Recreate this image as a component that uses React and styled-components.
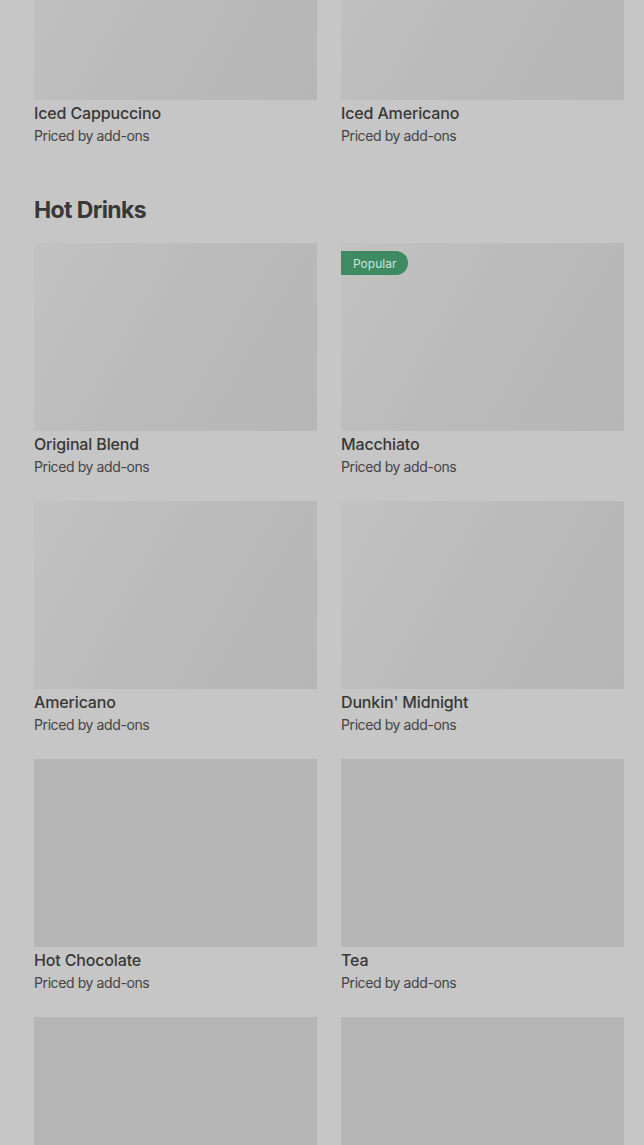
import React from "react";
import styled, { createGlobalStyle } from "styled-components";

const GlobalStyle = createGlobalStyle`
  html, body {
    margin: 0;
    padding: 0;
    background: #c6c6c6;
    overflow: hidden;
  }
  body {
    font-family: Inter, "Liberation Sans", sans-serif;
    color: #383838;
  }
`;

const iced = [
  { name: "Iced Cappuccino" },
  { name: "Iced Americano" },
];

const hot = [
  { name: "Original Blend", shimmer: true },
  { name: "Macchiato", shimmer: true, popular: true },
  { name: "Americano", shimmer: true },
  { name: "Dunkin' Midnight", shimmer: true },
  { name: "Hot Chocolate" },
  { name: "Tea" },
  { name: "" },
  { name: "" },
];

function Item({ name, shimmer, popular }) {
  return (
    <Card>
      <Thumb $shimmer={shimmer}>
        {popular && <Badge>Popular</Badge>}
      </Thumb>
      {name && (
        <>
          <Name>{name}</Name>
          <Price>Priced by add-ons</Price>
        </>
      )}
    </Card>
  );
}

export default function App() {
  return (
    <>
      <GlobalStyle />
      <Page>
        <Section>
          <Grid>
            {iced.map((i) => (
              <Item key={i.name} shimmer {...i} />
            ))}
          </Grid>
        </Section>
        <Section>
          <Heading>Hot Drinks</Heading>
          <Grid>
            {hot.map((i, ind) => (
              <Item key={ind} {...i} />
            ))}
          </Grid>
        </Section>
      </Page>
    </>
  );
}

const Page = styled.div`
  margin-top: -88px;
  padding: 0 20px 0 34px;
  display: flex;
  flex-direction: column;
  gap: 46px;
`;

const Section = styled.section`
  display: flex;
  flex-direction: column;
  gap: 18px;
`;

const Heading = styled.h2`
  margin: 0;
  font-size: 23px;
  line-height: 30px;
  font-weight: 700;
  letter-spacing: -0.6px;
  color: #383838;
`;

const Grid = styled.div`
  display: grid;
  grid-template-columns: 283px 283px;
  column-gap: 24px;
  row-gap: 21px;
`;

const Card = styled.div`
  display: flex;
  flex-direction: column;
`;

const Thumb = styled.div`
  position: relative;
  height: 188px;
  background: ${(p) =>
    p.$shimmer
      ? "linear-gradient(120deg, #c2c2c2 0%, #bbbbbb 45%, #b6b6b6 100%)"
      : "#b5b5b5"};
`;

const Badge = styled.span`
  position: absolute;
  top: 8px;
  left: 0;
  height: 24px;
  padding: 0 12px;
  display: flex;
  align-items: center;
  background: #3e8a62;
  color: #cfe2d5;
  font-size: 12px;
  border-radius: 0 12px 12px 0;
`;

const Name = styled.div`
  margin-top: 3px;
  font-size: 16px;
  line-height: 20px;
  font-weight: 500;
  letter-spacing: -0.15px;
  color: #383838;
`;

const Price = styled.div`
  font-size: 14px;
  line-height: 26px;
  letter-spacing: -0.4px;
  color: #444444;
`;
